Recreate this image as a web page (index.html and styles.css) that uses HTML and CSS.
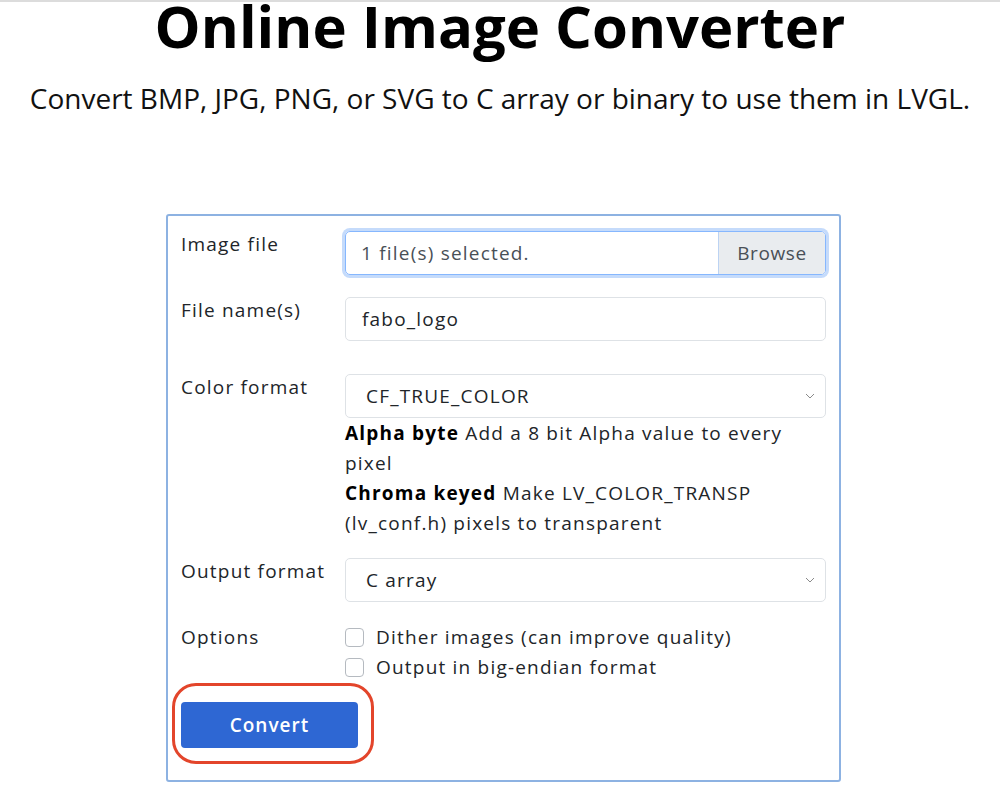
FILE: index.html
```html
<!DOCTYPE html>
<html lang="en">
<head>
<meta charset="utf-8">
<title>Online Image Converter</title>
<link rel="stylesheet" href="styles.css">
</head>
<body>
<div class="topline"></div>
<header class="hero">
  <h1 class="title">Online Image Converter</h1>
  <p class="subtitle">Convert BMP, JPG, PNG, or SVG to C array or binary to use them in LVGL.</p>
</header>
<main class="card">
  <div class="row row-file">
    <div class="label">Image file</div>
    <div class="field">
      <div class="file-input">
        <span class="file-text">1 file(s) selected.</span>
        <span class="browse">Browse</span>
      </div>
    </div>
  </div>
  <div class="row row-name">
    <div class="label">File name(s)</div>
    <div class="field">
      <div class="text-input">fabo_logo</div>
    </div>
  </div>
  <div class="row row-color">
    <div class="label">Color format</div>
    <div class="field">
      <div class="select">
        <span>CF_TRUE_COLOR</span>
        <svg class="chev" width="10" height="6" viewBox="0 0 10 6"><path d="M1 1l4 4 4-4" fill="none" stroke="#8a8a8a" stroke-width="1"/></svg>
      </div>
      <div class="help">
        <p><b>Alpha byte</b> Add a 8 bit Alpha value to every pixel</p>
        <p><b>Chroma keyed</b> Make LV_COLOR_TRANSP (lv_conf.h) pixels to transparent</p>
      </div>
    </div>
  </div>
  <div class="row row-output">
    <div class="label">Output format</div>
    <div class="field">
      <div class="select">
        <span>C array</span>
        <svg class="chev" width="10" height="6" viewBox="0 0 10 6"><path d="M1 1l4 4 4-4" fill="none" stroke="#8a8a8a" stroke-width="1"/></svg>
      </div>
    </div>
  </div>
  <div class="row row-options">
    <div class="label label-opt">Options</div>
    <div class="field">
      <label class="check"><span class="box"></span>Dither images (can improve quality)</label>
      <label class="check"><span class="box"></span>Output in big-endian format</label>
    </div>
  </div>
  <div class="actions">
    <button class="convert">Convert</button>
    <span class="highlight"></span>
  </div>
</main>
</body>
</html>
```
FILE: styles.css
```css
html, body {
  margin: 0;
  padding: 0;
  background: #fff;
}
body {
  font-family: "Open Sans", "Noto Sans", sans-serif;
  color: #212529;
  overflow: hidden;
}
.topline {
  height: 2px;
  background: #dcdcdc;
}
.hero {
  text-align: center;
}
.title {
  margin: -6px 0 0;
  font-size: 58px;
  line-height: 60px;
  font-weight: 700;
  color: #000;
}
.subtitle {
  margin: 24px 0 0;
  font-size: 28px;
  line-height: 36px;
  font-weight: 400;
  color: #111;
}
.card {
  box-sizing: border-box;
  width: 675px;
  margin: 98px 0 0 166px;
  border: 2px solid #8db2e2;
  border-radius: 3px;
  padding: 15px 13px 32px 13px;
  font-size: 19px;
  letter-spacing: 1.2px;
}
.row {
  display: flex;
}
.label {
  width: 164px;
  flex: none;
  line-height: 27px;
  color: #212529;
}
.label-opt {
  line-height: 30px;
}
.field {
  flex: 1;
  min-width: 0;
}
.row-file { margin-bottom: 22px; }
.row-name { margin-bottom: 33px; }
.row-color { margin-bottom: 20px; }
.row-output { margin-bottom: 20px; }
.row-options { margin-bottom: 20px; }

.file-input {
  box-sizing: border-box;
  height: 44px;
  display: flex;
  border: 1px solid #86b7fe;
  border-radius: 5px;
  box-shadow: 0 0 0 3px #c5dbfb;
  overflow: hidden;
}
.file-text {
  flex: 1;
  padding-left: 15px;
  line-height: 42px;
  color: #495057;
}
.browse {
  width: 106px;
  text-align: center;
  background: #e9ecef;
  border-left: 1px solid #bcd3f3;
  line-height: 42px;
  color: #495057;
  letter-spacing: 0.6px;
}
.text-input {
  box-sizing: border-box;
  height: 44px;
  border: 1px solid #dee2e6;
  border-radius: 5px;
  padding-left: 16px;
  line-height: 42px;
  color: #212529;
}
.select {
  box-sizing: border-box;
  height: 44px;
  border: 1px solid #dee2e6;
  border-radius: 5px;
  padding: 0 10px 0 20px;
  display: flex;
  align-items: center;
  justify-content: space-between;
  color: #212529;
}
.chev {
  display: block;
}
.help p {
  margin: 0;
  line-height: 30px;
  color: #212529;
}
.help b {
  font-weight: 700;
  color: #000;
}
.check {
  display: flex;
  align-items: center;
  height: 30px;
  color: #212529;
}
.box {
  box-sizing: border-box;
  width: 19px;
  height: 19px;
  border: 1px solid #b5bac0;
  border-radius: 4px;
  margin-right: 12px;
  flex: none;
}
.actions {
  position: relative;
  height: 46px;
}
.convert {
  width: 177px;
  height: 46px;
  border: 0;
  border-radius: 4px;
  background: #2e67d3;
  color: #fff;
  font-family: "Open Sans", "Noto Sans", sans-serif;
  font-size: 19px;
  font-weight: 600;
  letter-spacing: 1px;
  padding: 0;
}
.highlight {
  position: absolute;
  left: -9px;
  top: -19px;
  width: 196px;
  height: 75px;
  border: 3px solid #e3452b;
  border-radius: 24px;
}
```
